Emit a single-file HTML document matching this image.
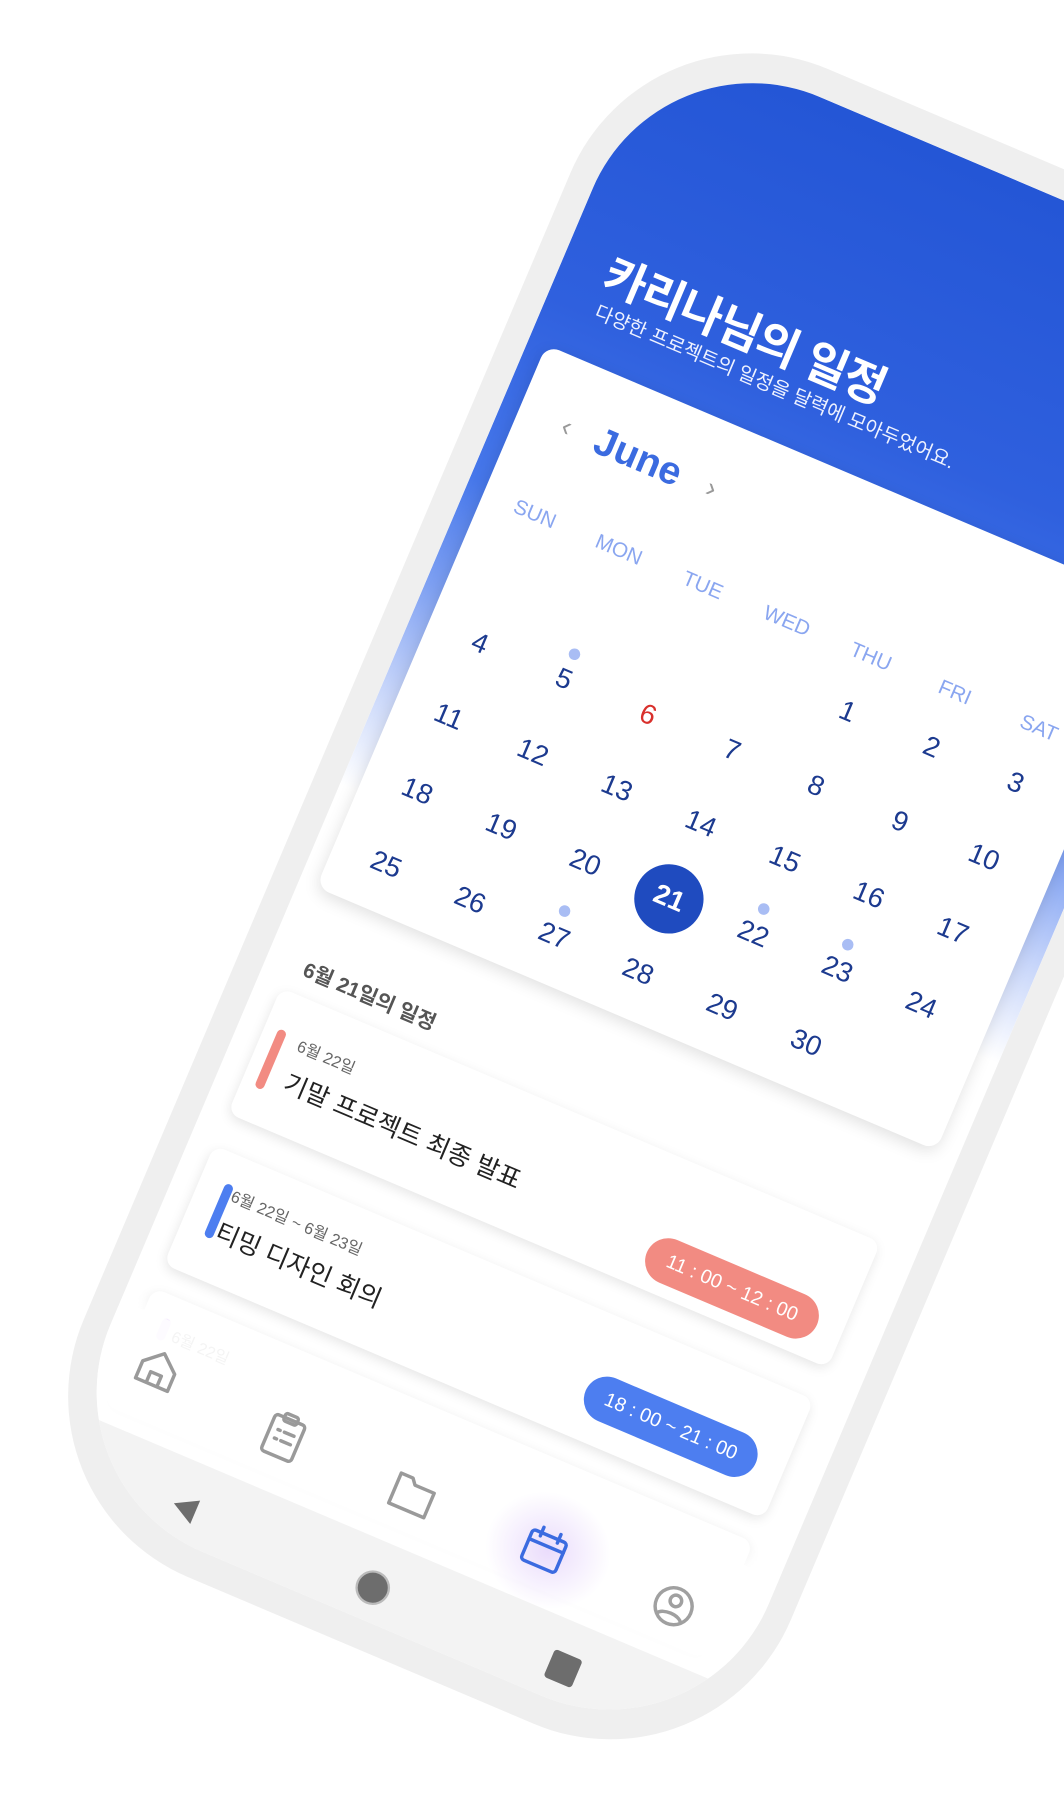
<!DOCTYPE html>
<html><head><meta charset="utf-8"><style>
*{margin:0;padding:0;box-sizing:border-box}
html,body{width:1064px;height:1811px;overflow:hidden;background:#fff;font-family:"Liberation Sans","Noto Sans CJK KR",sans-serif}
#stage{position:absolute;left:0;top:0;width:921px;height:1568px;transform:scale(1.15526);transform-origin:0 0}
#world{position:absolute;left:0;top:0;width:10px;height:10px;transform:rotate(23deg);transform-origin:0 0}
.abs{position:absolute}
#shell{left:513px;top:-225px;width:665px;height:1418px;border-radius:170px;background:#efefef}
#screen{left:536px;top:-200px;width:619px;height:1368px;border-radius:150px;overflow:hidden;background:#fff}
#hdr{left:0;top:0;width:619px;height:720px;background:linear-gradient(180deg,#2456d6 0,#2f60de 250px,#4677ea 420px,#7ea0f2 520px,#c8d6fa 620px,#fff 710px)}
.title{left:39px;top:180px;font-size:40px;font-weight:bold;color:#fff;white-space:nowrap;letter-spacing:-1px}
.sub{left:44px;top:232px;font-size:17px;color:#eef2ff;white-space:nowrap}
#card{left:16px;top:290px;width:583px;height:510px;border-radius:12px;background:#fff;box-shadow:0 4px 14px rgba(0,0,0,.12)}
.c{position:absolute;transform:translate(-50%,-50%);white-space:nowrap}
.wd{font-size:18px;color:#8aa6f0}
.dn{font-size:24px;color:#1c3a8f}
.dot{position:absolute;width:10px;height:10px;border-radius:50%;background:#a9bdf4;transform:translate(-50%,-50%)}
.ev{left:22px;width:564px;border-radius:10px;background:#fff;box-shadow:0 3px 10px rgba(0,0,0,.1)}
.pill{height:40px;width:160px;border-radius:20px;color:#fff;font-size:17px;text-align:center;line-height:40px;white-space:nowrap}
</style></head><body>
<div id="stage"><div id="world">
<div id="shell" class="abs"></div>
<div id="screen" class="abs">
 <div id="hdr" class="abs"></div>
 <div class="abs title">카리나님의 일정</div>
 <div class="abs sub">다양한 프로젝트의 일정을 달력에 모아두었어요.</div>
 <div id="card" class="abs">
  <div class="c" style="left:44px;top:59px;font-size:24px;color:#999">‹</div>
  <div class="c" style="left:111px;top:59px;font-size:34px;font-weight:bold;color:#3b6be0">June</div>
  <div class="c" style="left:180px;top:59px;font-size:24px;color:#999">›</div>
  <div class="c wd" style="left:48px;top:139px">SUN</div>
  <div class="c wd" style="left:127px;top:139px">MON</div>
  <div class="c wd" style="left:206px;top:139px">TUE</div>
  <div class="c wd" style="left:285px;top:139px">WED</div>
  <div class="c wd" style="left:364px;top:139px">THU</div>
  <div class="c wd" style="left:443px;top:139px">FRI</div>
  <div class="c wd" style="left:522px;top:139px">SAT</div>
  <!-- row1 -->
  <div class="c dn" style="left:364px;top:191px">1</div>
  <div class="c dn" style="left:443px;top:191px">2</div>
  <div class="c dn" style="left:522px;top:191px">3</div>
  <!-- row2 -->
  <div class="c dn" style="left:48px;top:261px">4</div>
  <div class="dot" style="left:127px;top:237px"></div>
  <div class="c dn" style="left:127px;top:261px">5</div>
  <div class="c dn" style="left:206px;top:261px;color:#d9302c">6</div>
  <div class="c dn" style="left:285px;top:261px">7</div>
  <div class="c dn" style="left:364px;top:261px">8</div>
  <div class="c dn" style="left:443px;top:261px">9</div>
  <div class="c dn" style="left:522px;top:261px">10</div>
  <!-- row3 -->
  <div class="c dn" style="left:48px;top:330px">11</div>
  <div class="c dn" style="left:127px;top:330px">12</div>
  <div class="c dn" style="left:206px;top:330px">13</div>
  <div class="c dn" style="left:285px;top:330px">14</div>
  <div class="c dn" style="left:364px;top:330px">15</div>
  <div class="c dn" style="left:443px;top:330px">16</div>
  <div class="c dn" style="left:522px;top:330px">17</div>
  <!-- row4 -->
  <div class="c dn" style="left:48px;top:400px">18</div>
  <div class="c dn" style="left:127px;top:400px">19</div>
  <div class="c dn" style="left:206px;top:400px">20</div>
  <div class="c" style="left:285px;top:400px;width:60px;height:60px;border-radius:50%;background:#1f4bbf"></div>
  <div class="c dn" style="left:285px;top:400px;color:#fff;font-weight:bold">21</div>
  <div class="dot" style="left:364px;top:376px"></div>
  <div class="c dn" style="left:364px;top:400px">22</div>
  <div class="dot" style="left:443px;top:376px"></div>
  <div class="c dn" style="left:443px;top:400px">23</div>
  <div class="c dn" style="left:522px;top:400px">24</div>
  <!-- row5 -->
  <div class="c dn" style="left:48px;top:469px">25</div>
  <div class="c dn" style="left:127px;top:469px">26</div>
  <div class="dot" style="left:206px;top:445px"></div>
  <div class="c dn" style="left:206px;top:469px">27</div>
  <div class="c dn" style="left:285px;top:469px">28</div>
  <div class="c dn" style="left:364px;top:469px">29</div>
  <div class="c dn" style="left:443px;top:469px">30</div>
 </div>
 <div class="abs" style="left:34px;top:855px;font-size:18px;font-weight:bold;color:#555;white-space:nowrap">6월 21일의 일정</div>
 <div class="abs ev" style="top:892px;height:118px">
  <div class="abs" style="left:12px;top:33px;width:8px;height:55px;border-radius:4px;background:#f28b82"></div>
  <div class="abs" style="left:33px;top:30px;font-size:14px;color:#666;white-space:nowrap">6월 22일</div>
  <div class="abs" style="left:35px;top:56px;font-size:22px;color:#222;white-space:nowrap">기말 프로젝트 최종 발표</div>
  <div class="abs pill" style="left:381px;top:67px;background:#f28b82">11 : 00 ~ 12 : 00</div>
 </div>
 <div class="abs ev" style="top:1040px;height:112px">
  <div class="abs" style="left:22px;top:26px;width:8px;height:50px;border-radius:4px;background:#4d7ef0"></div>
  <div class="abs" style="left:31px;top:24px;font-size:14px;color:#666;white-space:nowrap">6월 22일 ~ 6월 23일</div>
  <div class="abs" style="left:31px;top:50px;font-size:22px;color:#222;white-space:nowrap">티밍 디자인 회의</div>
  <div class="abs pill" style="left:379px;top:50px;background:#4d7ef0">18 : 00 ~ 21 : 00</div>
 </div>
 <div class="abs ev" style="top:1174px;height:110px">
  <div class="abs" style="left:18px;top:20px;width:8px;height:20px;border-radius:4px;background:#e2c8fa"></div>
  <div class="abs" style="left:31px;top:22px;font-size:14px;color:#666">6월 22일</div>
 </div>
 <!-- nav -->
 <div class="abs" style="left:0;top:1195px;width:619px;height:105px;background:rgba(255,255,255,.93);box-shadow:0 -8px 16px rgba(255,255,255,.9)"></div>
 <div class="abs" style="left:370px;top:1200px;width:110px;height:100px;border-radius:50%;background:radial-gradient(closest-side,rgba(225,205,250,.7),rgba(255,255,255,0))"></div>
 <svg class="abs" style="left:0;top:1200px" width="619" height="100" viewBox="0 0 619 100" fill="none" stroke-width="3" stroke-linejoin="round" stroke-linecap="round">
  <g stroke="#9a9a9a"><path d="M38 52 V36 L53 23 L68 36 V52 Z M48 52 V42 H58 V52"/></g>
  <g stroke="#9a9a9a"><rect x="162" y="33" width="28" height="34" rx="3"/><rect x="170" y="29" width="12" height="7" rx="2"/><path d="M169 45h2M175 45h9M169 53h2M175 53h9"/></g>
  <g stroke="#9a9a9a"><path d="M282 38 h11 l4 5 h18 v23 h-33 Z"/></g>
  <g stroke="#3b6be0"><rect x="406" y="38" width="32" height="28" rx="3"/><path d="M406 47h32M414 33v8M430 33v8"/></g>
  <g stroke="#a0a0a0"><circle cx="544" cy="52" r="16"/><circle cx="544" cy="47" r="5"/><path d="M533 63c3-6 19-6 22 0"/></g>
 </svg>
 <!-- android bar -->
 <div class="abs" style="left:0;top:1298px;width:619px;height:80px;background:#f3f3f3"></div>
 <div class="abs" style="left:111px;top:1328px;width:0;height:0;border-top:11px solid transparent;border-bottom:11px solid transparent;border-right:20px solid #6d6d6d"></div>
 <div class="abs" style="left:285px;top:1326px;width:26px;height:26px;border-radius:50%;background:#6d6d6d;box-shadow:0 0 0 2px #bbb"></div>
 <div class="abs" style="left:464px;top:1326px;width:26px;height:26px;border-radius:3px;background:#6d6d6d"></div>
</div>
</div></div>
</body></html>
